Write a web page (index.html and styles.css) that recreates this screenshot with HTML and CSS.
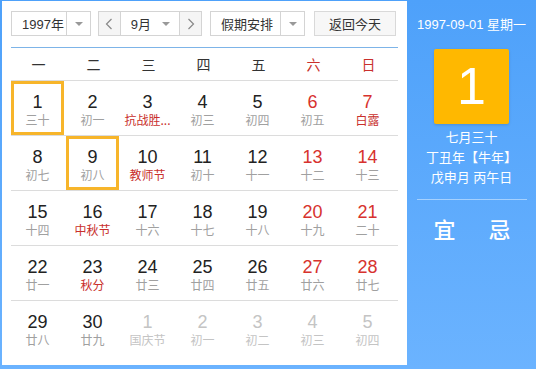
FILE: index.html
```html
<!DOCTYPE html>
<html lang="zh-CN">

    <head>
        <meta charset="UTF-8">
        <meta name="viewport"
            content="width=device-width,initial-scale=1.0">
        <title>万年历</title>
        <link rel="stylesheet" href="styles.css">
    </head>

    <body>
        <div class="calendar">
            <div class="main">
                <div class="toolbar">
                    <div class="select year">
                        <span class="value">1997年</span>
                        <span class="arrow"><i class="tri"></i></span>
                    </div>
                    <div class="select month">
                        <span class="btn"><svg width="8" height="12" viewBox="0 0 8 12"><polyline points="6.5,1 1.5,6 6.5,11" fill="none" stroke="#888" stroke-width="1.2"/></svg></span>
                        <span class="value">9月</span>
                        <span class="arrow"><i class="tri"></i></span>
                        <span class="btn"><svg width="8" height="12" viewBox="0 0 8 12"><polyline points="1.5,1 6.5,6 1.5,11" fill="none" stroke="#888" stroke-width="1.2"/></svg></span>
                    </div>
                    <div class="select holiday">
                        <span class="value">假期安排</span>
                        <span class="arrow"><i class="tri"></i></span>
                    </div>
                    <div class="today">返回今天</div>
                </div>

                <div class="weekdays">
                    <span>一</span><span>二</span><span>三</span><span>四</span><span>五</span>
                    <span class="red">六</span><span class="red">日</span>
                </div>

                <div class="week">
                    <div class="day current"><b>1</b><em>三十</em></div>
                    <div class="day"><b>2</b><em>初一</em></div>
                    <div class="day"><b>3</b><em class="fest">抗战胜...</em></div>
                    <div class="day"><b>4</b><em>初三</em></div>
                    <div class="day"><b>5</b><em>初四</em></div>
                    <div class="day weekend"><b>6</b><em>初五</em></div>
                    <div class="day weekend"><b>7</b><em class="fest">白露</em></div>
                </div>
                <div class="week">
                    <div class="day"><b>8</b><em>初七</em></div>
                    <div class="day current"><b>9</b><em>初八</em></div>
                    <div class="day"><b>10</b><em class="fest">教师节</em></div>
                    <div class="day"><b>11</b><em>初十</em></div>
                    <div class="day"><b>12</b><em>十一</em></div>
                    <div class="day weekend"><b>13</b><em>十二</em></div>
                    <div class="day weekend"><b>14</b><em>十三</em></div>
                </div>
                <div class="week">
                    <div class="day"><b>15</b><em>十四</em></div>
                    <div class="day"><b>16</b><em class="fest">中秋节</em></div>
                    <div class="day"><b>17</b><em>十六</em></div>
                    <div class="day"><b>18</b><em>十七</em></div>
                    <div class="day"><b>19</b><em>十八</em></div>
                    <div class="day weekend"><b>20</b><em>十九</em></div>
                    <div class="day weekend"><b>21</b><em>二十</em></div>
                </div>
                <div class="week">
                    <div class="day"><b>22</b><em>廿一</em></div>
                    <div class="day"><b>23</b><em class="fest">秋分</em></div>
                    <div class="day"><b>24</b><em>廿三</em></div>
                    <div class="day"><b>25</b><em>廿四</em></div>
                    <div class="day"><b>26</b><em>廿五</em></div>
                    <div class="day weekend"><b>27</b><em>廿六</em></div>
                    <div class="day weekend"><b>28</b><em>廿七</em></div>
                </div>
                <div class="week">
                    <div class="day"><b>29</b><em>廿八</em></div>
                    <div class="day"><b>30</b><em>廿九</em></div>
                    <div class="day other"><b>1</b><em>国庆节</em></div>
                    <div class="day other"><b>2</b><em>初一</em></div>
                    <div class="day other"><b>3</b><em>初二</em></div>
                    <div class="day other"><b>4</b><em>初三</em></div>
                    <div class="day other"><b>5</b><em>初四</em></div>
                </div>
            </div>

            <div class="side">
                <div class="date">1997-09-01 星期一</div>
                <div class="big">1</div>
                <div class="lunar">
                    <p>七月三十</p>
                    <p>丁丑年【牛年】</p>
                    <p>戊申月 丙午日</p>
                </div>
                <div class="yiji">
                    <span>宜</span>
                    <span>忌</span>
                </div>
            </div>
        </div>
    </body>

</html>
```

FILE: styles.css
```css
* {
    margin: 0;
    padding: 0;
    box-sizing: border-box;
}

body {
    width: 536px;
    height: 369px;
    overflow: hidden;
    font-family: "Liberation Sans", "Noto Sans CJK SC", sans-serif;
    color: #333;
}

.calendar {
    display: flex;
    width: 536px;
    height: 369px;
    padding: 1px 0 4px 2px;
    background: linear-gradient(#4ea1fa, #6bb3ff);
}

/* 左侧日历 */
.main {
    width: 405px;
    background: #fff;
    padding: 10px 9px 0;
}

.toolbar {
    display: flex;
    height: 25px;
    font-size: 13px;
}

.select {
    display: flex;
    border: 1px solid #d4d4d4;
    background: #fff;
    margin-right: 8px;
}

.select .value {
    display: flex;
    align-items: center;
    padding-left: 10px;
    color: #333;
}

.select .arrow {
    display: flex;
    align-items: center;
    justify-content: center;
    width: 24px;
    border-left: 1px solid #d4d4d4;
}

.tri {
    width: 0;
    height: 0;
    border-left: 4px solid transparent;
    border-right: 4px solid transparent;
    border-top: 4px solid #999;
}

.year {
    width: 80px;
    margin-right: 7px;
}

.year .value {
    width: 54px;
}

.month {
    width: 104px;
}

.month .btn {
    display: flex;
    align-items: center;
    justify-content: center;
    width: 22px;
    background: #f5f5f5;
}

.month .btn:first-child {
    border-right: 1px solid #d4d4d4;
}

.month .btn:last-child {
    border-left: 1px solid #d4d4d4;
}

.month .value {
    width: 35px;
}

.month .arrow {
    border-left: none;
    justify-content: flex-start;
    padding-left: 7px;
}

.holiday {
    width: 95px;
    margin-right: 9px;
}

.holiday .value {
    width: 70px;
}

.today {
    display: flex;
    align-items: center;
    justify-content: center;
    width: 82px;
    border: 1px solid #d9d9d9;
    background: #f7f7f7;
    color: #333;
}

.weekdays {
    display: grid;
    grid-template-columns: repeat(7, 55px);
    align-items: center;
    height: 33px;
    margin-top: 11px;
    border-top: 1px solid #7db4e8;
    font-size: 14px;
    font-family: "Noto Sans CJK SC", sans-serif;
    text-align: center;
}

.weekdays .red {
    color: #c9302c;
}

.week {
    display: grid;
    grid-template-columns: repeat(7, 55px);
    height: 55px;
    border-top: 1px solid #dcdcdc;
}

.day {
    width: 53px;
    height: 54px;
    padding-top: 10px;
    text-align: center;
}

.day b {
    display: block;
    font-weight: normal;
    font-size: 18px;
    line-height: 22px;
    color: #222;
}

.day em {
    display: block;
    font-style: normal;
    font-size: 12px;
    line-height: 14px;
    color: #a0a0a0;
    font-family: "Noto Sans CJK SC", sans-serif;
}

.day em.fest {
    color: #c9302c;
}

.weekend b {
    color: #d7322e;
}

.other b,
.other em {
    color: #c4c4c4;
}

.current {
    box-shadow: inset 0 0 0 3px #f7b52a;
}

/* 右侧信息 */
.side {
    flex: 1;
    color: #fff;
    text-align: center;
}

.side .date {
    margin-top: 15px;
    font-size: 13px;
    line-height: 18px;
}

.side .big {
    width: 75px;
    height: 75px;
    margin: 15px auto 0;
    background: #ffb800;
    border-radius: 2px;
    box-shadow: 0 1px 3px rgba(0, 0, 0, 0.15);
    font-size: 52px;
    line-height: 75px;
}

.lunar {
    margin-top: 4px;
    font-size: 13px;
    line-height: 20px;
}

.yiji {
    display: flex;
    justify-content: center;
    gap: 33px;
    margin: 11px 9px 0 10px;
    padding-top: 13px;
    border-top: 1px solid rgba(255, 255, 255, 0.45);
    font-size: 22px;
    line-height: 30px;
    font-weight: 500;
    font-family: "Noto Sans CJK SC", sans-serif;
}
```
